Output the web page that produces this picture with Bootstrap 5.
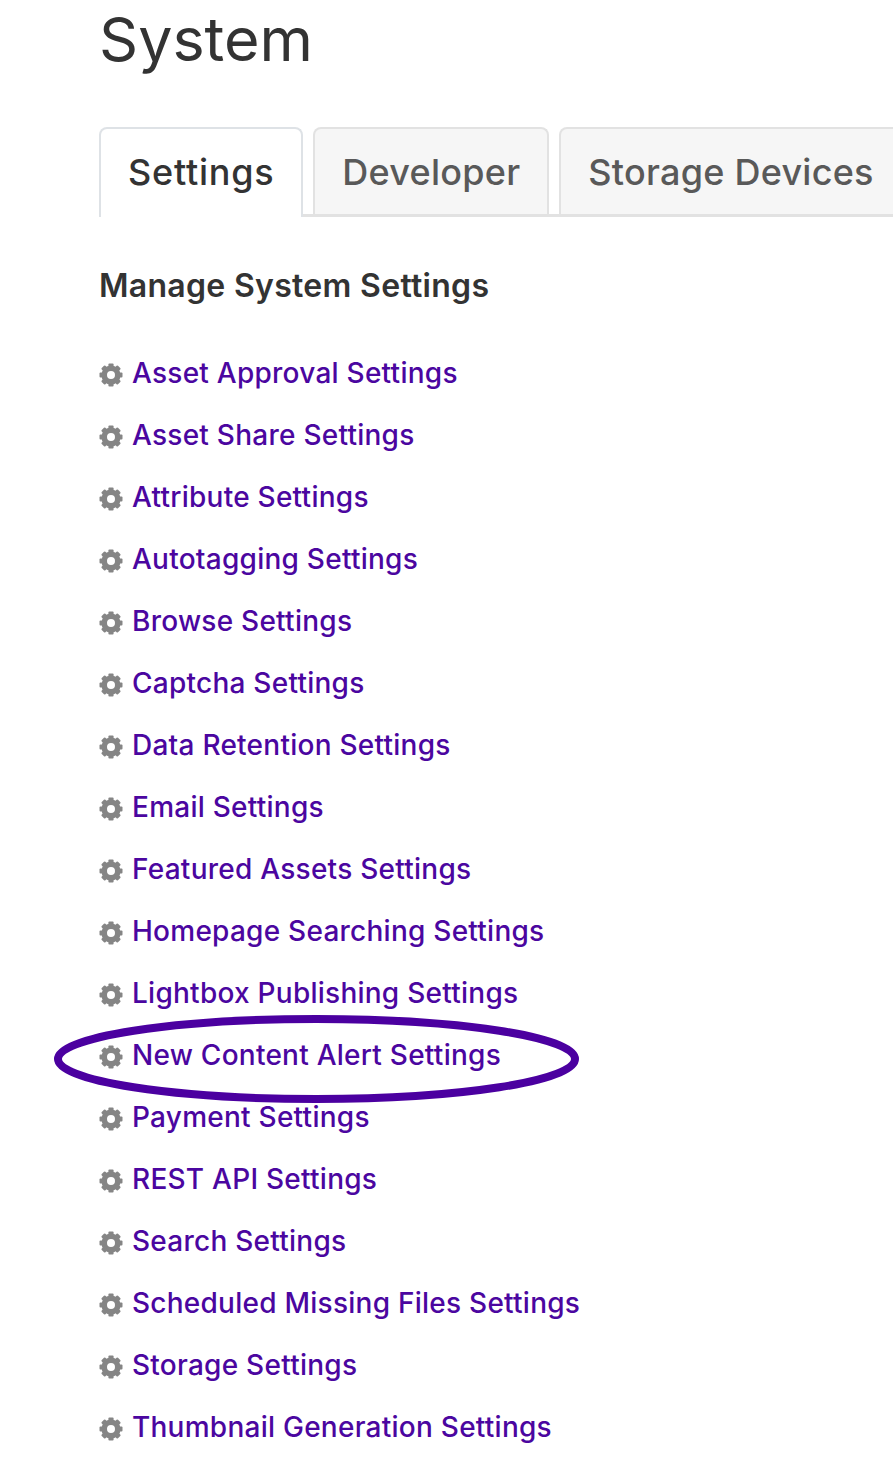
<!DOCTYPE html>
<html lang="en">
<head>
  <meta charset="UTF-8">
  <meta name="viewport" content="width=device-width, initial-scale=1.0">
  <title>System</title>
  <link href="https://cdn.jsdelivr.net/npm/bootstrap@5.3.0/dist/css/bootstrap.min.css" rel="stylesheet">
  <style>
    body {
      font-family: "Inter", "Liberation Sans", sans-serif;
      background-color: #fff;
    }
    .page-wrap {
      padding-left: 99px;
      position: relative;
      height: 1468px;
      overflow: hidden;
    }
    .page-title {
      font-size: 61px;
      font-weight: 400;
      color: #333;
      line-height: 78px;
      margin: 0 0 49px;
    }
    .sys-tabs {
      flex-wrap: nowrap;
      align-items: flex-start;
      gap: 10px;
      height: 90px;
      overflow: hidden;
      border-bottom: 0;
      background: linear-gradient(#e2e2e2, #e2e2e2) left bottom / 100% 3px no-repeat;
    }
    .sys-tabs .nav-link {
      font-size: 36px;
      font-weight: 500;
      letter-spacing: .25px;
      line-height: 40px;
      height: 87px;
      padding: 23px 27px 0;
      margin: 0;
      color: #595959;
      background-color: #f6f6f6;
      border: 2px solid #e2e2e2;
      border-bottom: 0;
      border-radius: 8px 8px 0 0;
      white-space: nowrap;
    }
    .sys-tabs .nav-link.active {
      height: 90px;
      letter-spacing: .75px;
      color: #333;
      background-color: #fff;
    }
    .section-title {
      font-size: 32px;
      font-weight: 600;
      letter-spacing: .3px;
      color: #333;
      line-height: 40px;
      margin: 49px 0 36px;
    }
    .settings-list {
      margin: 0;
      padding: 0;
      list-style: none;
    }
    .settings-list li {
      height: 62px;
      display: flex;
      align-items: center;
      gap: 9px;
    }
    .settings-list a {
      font-size: 28px;
      font-weight: 500;
      letter-spacing: .25px;
      color: #4b06a0;
      text-decoration: none;
      white-space: nowrap;
    }
    .cog-icon {
      width: 24px;
      height: 24px;
      margin-top: 3px;
      flex: none;
    }
    .alert-ring {
      position: absolute;
      left: 54px;
      top: 1015px;
      width: 525px;
      height: 88px;
      pointer-events: none;
    }
  </style>
</head>
<body>
  <svg width="0" height="0" class="d-block">
    <symbol id="cog" viewBox="0 0 24 24">
      <circle cx="12" cy="12" r="6.8" fill="none" stroke="#858585" stroke-width="5.6"/>
      <g fill="#858585">
        <rect x="9.4" y="0.5" width="5.2" height="5" rx="1"/>
        <rect x="9.4" y="0.5" width="5.2" height="5" rx="1" transform="rotate(45 12 12)"/>
        <rect x="9.4" y="0.5" width="5.2" height="5" rx="1" transform="rotate(90 12 12)"/>
        <rect x="9.4" y="0.5" width="5.2" height="5" rx="1" transform="rotate(135 12 12)"/>
        <rect x="9.4" y="0.5" width="5.2" height="5" rx="1" transform="rotate(180 12 12)"/>
        <rect x="9.4" y="0.5" width="5.2" height="5" rx="1" transform="rotate(225 12 12)"/>
        <rect x="9.4" y="0.5" width="5.2" height="5" rx="1" transform="rotate(270 12 12)"/>
        <rect x="9.4" y="0.5" width="5.2" height="5" rx="1" transform="rotate(315 12 12)"/>
      </g>
    </symbol>
  </svg>
  <div class="page-wrap">
    <h1 class="page-title">System</h1>
    <ul class="nav nav-tabs sys-tabs">
      <li class="nav-item"><a class="nav-link active" href="#">Settings</a></li>
      <li class="nav-item"><a class="nav-link" href="#">Developer</a></li>
      <li class="nav-item"><a class="nav-link" href="#">Storage Devices</a></li>
    </ul>
    <h2 class="section-title">Manage System Settings</h2>
    <ul class="settings-list" id="settingsList"></ul>
    <svg class="alert-ring" viewBox="0 0 525 88">
      <ellipse cx="262.5" cy="44" rx="258.5" ry="40" fill="none" stroke="#4b00a0" stroke-width="8"/>
    </svg>
  </div>

  <script>
    const items = [
      'Asset Approval Settings', 'Asset Share Settings', 'Attribute Settings',
      'Autotagging Settings', 'Browse Settings', 'Captcha Settings',
      'Data Retention Settings', 'Email Settings', 'Featured Assets Settings',
      'Homepage Searching Settings', 'Lightbox Publishing Settings',
      'New Content Alert Settings', 'Payment Settings', 'REST API Settings',
      'Search Settings', 'Scheduled Missing Files Settings', 'Storage Settings',
      'Thumbnail Generation Settings'
    ];
    document.getElementById('settingsList').innerHTML = items.map(function(name) {
      return '<li><svg class="cog-icon"><use href="#cog"></use></svg><a href="#">' + name + '</a></li>';
    }).join('');
  </script>
  <script src="https://cdn.jsdelivr.net/npm/bootstrap@5.3.0/dist/js/bootstrap.bundle.min.js"></script>
</body>
</html>
